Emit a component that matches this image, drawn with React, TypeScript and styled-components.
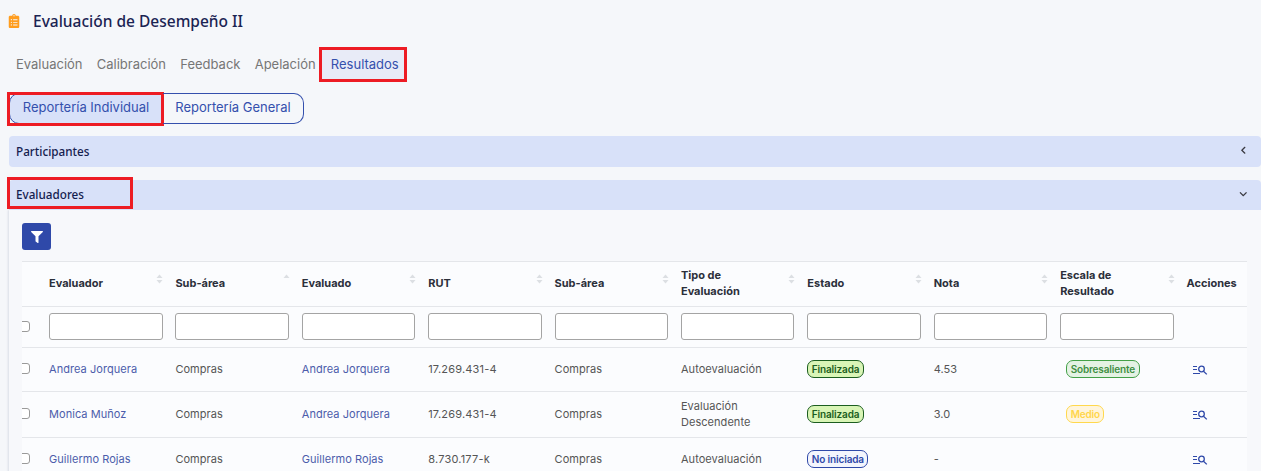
import { FaChevronDown, FaChevronLeft, FaClipboardList, FaFilter } from 'react-icons/fa';
import styled, { createGlobalStyle } from 'styled-components';

const GlobalStyle = createGlobalStyle`
  html, body {
    margin: 0;
    height: 471px;
    overflow: hidden;
    background: #f5f7fa;
  }
  * {
    box-sizing: border-box;
  }
`;

const Page = styled.div`
  padding: 0 0 0 9px;
  font-family: Inter, "Liberation Sans", sans-serif;
`;

const Header = styled.header`
  display: flex;
  align-items: center;
  height: 43px;
  gap: 12px;
  padding-bottom: 1px;
  margin-left: -2px;
  color: #ff9d1e;
  font-size: 14px;
`;

const Title = styled.h1`
  margin: 0;
  font-family: "Noto Sans", sans-serif;
  font-size: 15.5px;
  font-weight: 500;
  color: #1b2453;
`;

const Tabs = styled.nav`
  display: flex;
  height: 35px;
  margin-top: 4px;
  margin-left: 3px;
  align-items: center;
`;

const Tab = styled.a<{ $active?: boolean }>`
  position: relative;
  display: flex;
  align-items: center;
  height: 35px;
  padding: 0 ${(p) => (p.$active ? '8px' : '4px')} 2px ${(p) => (p.$active ? '12px' : '4px')};
  margin-right: ${(p) => (p.$active ? '0' : '6.2px')};
  margin-left: ${(p) => (p.$active ? '-7px' : '0')};
  font-size: 13px;
  color: ${(p) => (p.$active ? '#3450ad' : '#767676')};
  background: ${(p) => (p.$active ? '#e8ebf7' : 'transparent')};
`;

const Mark = styled.span<{ $l: number; $t: number; $w: number; $h: number }>`
  position: absolute;
  left: ${(p) => p.$l}px;
  top: ${(p) => p.$t}px;
  width: ${(p) => p.$w}px;
  height: ${(p) => p.$h}px;
  border: 3px solid #ed1c24;
  pointer-events: none;
`;

const Segments = styled.div`
  display: flex;
  width: 295px;
  height: 31px;
  margin-top: 11px;
`;

const Segment = styled.button<{ $active?: boolean }>`
  position: relative;
  flex: ${(p) => (p.$active ? '0 0 154px' : '1')};
  padding: 0 0 3px;
  font-family: inherit;
  font-size: 13px;
  color: #3450ad;
  background: ${(p) => (p.$active ? '#d8e1f9' : 'transparent')};
  border: 1px solid #3450ad;
  border-left-width: ${(p) => (p.$active ? '1px' : '0')};
  border-radius: ${(p) => (p.$active ? '10px 0 0 10px' : '0 10px 10px 0')};
`;

const Accordion = styled.section<{ $gap: number }>`
  margin-top: ${(p) => p.$gap}px;
`;

const AccordionHead = styled.div<{ $open?: boolean; $h: number }>`
  position: relative;
  display: flex;
  align-items: center;
  justify-content: space-between;
  height: ${(p) => p.$h}px;
  padding: 0 14px 2px 7px;
  font-family: "Noto Sans", sans-serif;
  font-size: 11.7px;
  font-weight: 500;
  color: #14204f;
  background: #d8e1f9;
  border-radius: ${(p) => (p.$open ? '4px 4px 0 0' : '4px')};

  & svg {
    font-size: 8.5px;
    color: #3a3a42;
  }
`;

const AccordionBody = styled.div`
  padding: 13px 14px 0 13px;
  background: #f7f8fb;
  box-shadow: -1px 0 2px #d9dde6;
`;

const FilterButton = styled.button`
  display: flex;
  align-items: center;
  justify-content: center;
  width: 29px;
  height: 27px;
  padding: 0;
  color: #fff;
  font-size: 12px;
  background: #2f49a9;
  border: 0;
  border-radius: 3px;
`;

const TableWrap = styled.div`
  margin-top: 11px;
  overflow: hidden;
  background: #fbfcfe;
`;

const Table = styled.table`
  width: 1225px;
  table-layout: fixed;
  border-collapse: collapse;
  font-size: 11px;
  color: #555;
`;

const FirstCol = styled.col`
  width: 27px;
`;

const DataCol = styled.col`
  width: 126.4px;
`;

const Row = styled.tr<{ $h: number }>`
  height: ${(p) => p.$h}px;
  border-top: 1px solid #e4e6ea;
`;

const HeadCell = styled.th`
  padding: 0 12px 2px 0;
  font-weight: 700;
  line-height: 16px;
  text-align: left;
  color: #2b2f3a;
`;

const HeadInner = styled.div`
  display: flex;
  align-items: center;
  justify-content: space-between;
`;

const HeadLabel = styled.span`
  max-width: 90px;
`;

const SortIcon = styled.svg`
  flex: none;
  width: 7px;
  height: 10px;
  margin: 0 0 9px 4px;
  fill: #dcdfe3;
`;

const Cell = styled.td`
  padding: 0 12px 2px 0;
  line-height: 16px;
  vertical-align: middle;
  letter-spacing: 0.05px;
`;

const RutCell = styled(Cell)`
  letter-spacing: 0.2px;
`;

const Check = styled.span`
  display: block;
  width: 11px;
  height: 11px;
  margin-left: -3px;
  background: #fff;
  border: 1px solid #9a9a9a;
  border-radius: 3px;
`;

const FilterInput = styled.input`
  display: block;
  width: 113.5px;
  height: 27px;
  padding: 0 4px;
  background: #fff;
  border: 1px solid #a4a4a4;
  border-radius: 3px;
`;

const PersonLink = styled.a`
  color: #4c5cab;
`;

const tones = {
  done: { bg: '#d9f5b6', line: '#1c5e20', text: '#1c5e20' },
  idle: { bg: '#f3f5fd', line: '#2f49a9', text: '#2f49a9' },
  high: { bg: '#e4f2e4', line: '#43a047', text: '#3f8f43' },
  mid: { bg: '#fff5dc', line: '#ffd84d', text: '#ffd54a' },
};

const Badge = styled.span<{ $tone: keyof typeof tones; $scale?: boolean }>`
  display: inline-block;
  height: 18px;
  margin-left: ${(p) => (p.$scale ? '6px' : '0')};
  padding: 0 3.5px;
  font-size: 10px;
  font-weight: 600;
  line-height: 16px;
  letter-spacing: -0.15px;
  color: ${(p) => tones[p.$tone].text};
  background: ${(p) => tones[p.$tone].bg};
  border: 1px solid ${(p) => tones[p.$tone].line};
  border-radius: 7px;
`;

const ActionIcon = styled.svg`
  display: block;
  width: 15px;
  height: 10px;
  margin: 2px 0 0 6px;
`;

const columns = [
  { label: 'Evaluador', sort: 'both' },
  { label: 'Sub-área', sort: 'up' },
  { label: 'Evaluado', sort: 'both' },
  { label: 'RUT', sort: 'both' },
  { label: 'Sub-área', sort: 'both' },
  { label: 'Tipo de Evaluación', sort: 'both' },
  { label: 'Estado', sort: 'both' },
  { label: 'Nota', sort: 'both' },
  { label: 'Escala de Resultado', sort: 'both' },
];

type Item = {
  evaluator: string;
  evaluated: string;
  rut: string;
  type: string;
  status: ['done' | 'idle', string];
  grade: string;
  scale?: ['high' | 'mid', string];
  height: number;
};

const items: Item[] = [
  {
    evaluator: 'Andrea Jorquera',
    evaluated: 'Andrea Jorquera',
    rut: '17.269.431-4',
    type: 'Autoevaluación',
    status: ['done', 'Finalizada'],
    grade: '4.53',
    scale: ['high', 'Sobresaliente'],
    height: 44,
  },
  {
    evaluator: 'Monica Muñoz',
    evaluated: 'Andrea Jorquera',
    rut: '17.269.431-4',
    type: 'Evaluación Descendente',
    status: ['done', 'Finalizada'],
    grade: '3.0',
    scale: ['mid', 'Medio'],
    height: 46,
  },
  {
    evaluator: 'Guillermo Rojas',
    evaluated: 'Guillermo Rojas',
    rut: '8.730.177-k',
    type: 'Autoevaluación',
    status: ['idle', 'No iniciada'],
    grade: '-',
    height: 44,
  },
];

function Sort({ kind }: { kind: string }) {
  return (
    <SortIcon viewBox="0 0 7 10">
      <path d="M3.5 0.5 6.5 4H0.5Z" />
      {kind === 'both' && <path d="M3.5 9.5 0.5 6H6.5Z" />}
    </SortIcon>
  );
}

function SearchList() {
  return (
    <ActionIcon viewBox="0 0 15 10" fill="none" stroke="#2f49a9">
      <path d="M0 1.5H4M0 4.5H4M0 8.5H7" strokeWidth="1.2" />
      <circle cx="8.5" cy="4" r="2.8" strokeWidth="1.3" />
      <path d="M10.5 6.2 13.8 9.4" strokeWidth="1.3" />
    </ActionIcon>
  );
}

export default function App() {
  return (
    <Page>
      <GlobalStyle />
      <Header>
        <FaClipboardList />
        <Title>Evaluación de Desempeño II</Title>
      </Header>

      <Tabs>
        <Tab>Evaluación</Tab>
        <Tab>Calibración</Tab>
        <Tab>Feedback</Tab>
        <Tab>Apelación</Tab>
        <Tab $active>
          Resultados
          <Mark $l={0} $t={0} $w={88} $h={35} />
        </Tab>
      </Tabs>

      <Segments>
        <Segment $active>
          Reportería Individual
          <Mark $l={-3} $t={-2} $w={157} $h={34} />
        </Segment>
        <Segment>Reportería General</Segment>
      </Segments>

      <Accordion $gap={12}>
        <AccordionHead $h={31}>
          Participantes
          <FaChevronLeft />
        </AccordionHead>
      </Accordion>

      <Accordion $gap={13}>
        <AccordionHead $open $h={30}>
          Evaluadores
          <FaChevronDown />
          <Mark $l={-2} $t={-3} $w={126} $h={32} />
        </AccordionHead>
        <AccordionBody>
          <FilterButton>
            <FaFilter />
          </FilterButton>
          <TableWrap>
            <Table>
              <colgroup>
                <FirstCol />
                {columns.map((c, i) => (
                  <DataCol key={i} />
                ))}
                <col />
              </colgroup>
              <thead>
                <Row $h={45}>
                  <HeadCell />
                  {columns.map((c, i) => (
                    <HeadCell key={i}>
                      <HeadInner>
                        <HeadLabel>{c.label}</HeadLabel>
                        <Sort kind={c.sort} />
                      </HeadInner>
                    </HeadCell>
                  ))}
                  <HeadCell>Acciones</HeadCell>
                </Row>
                <Row $h={41}>
                  <Cell>
                    <Check />
                  </Cell>
                  {columns.map((c, i) => (
                    <Cell key={i}>
                      <FilterInput />
                    </Cell>
                  ))}
                  <Cell />
                </Row>
              </thead>
              <tbody>
                {items.map((item, i) => (
                  <Row key={i} $h={item.height}>
                    <Cell>
                      <Check />
                    </Cell>
                    <Cell>
                      <PersonLink>{item.evaluator}</PersonLink>
                    </Cell>
                    <Cell>Compras</Cell>
                    <Cell>
                      <PersonLink>{item.evaluated}</PersonLink>
                    </Cell>
                    <RutCell>{item.rut}</RutCell>
                    <Cell>Compras</Cell>
                    <Cell>{item.type}</Cell>
                    <Cell>
                      <Badge $tone={item.status[0]}>{item.status[1]}</Badge>
                    </Cell>
                    <Cell>{item.grade}</Cell>
                    <Cell>
                      {item.scale && (
                        <Badge $tone={item.scale[0]} $scale>
                          {item.scale[1]}
                        </Badge>
                      )}
                    </Cell>
                    <Cell>
                      <SearchList />
                    </Cell>
                  </Row>
                ))}
              </tbody>
            </Table>
          </TableWrap>
        </AccordionBody>
      </Accordion>
    </Page>
  );
}
